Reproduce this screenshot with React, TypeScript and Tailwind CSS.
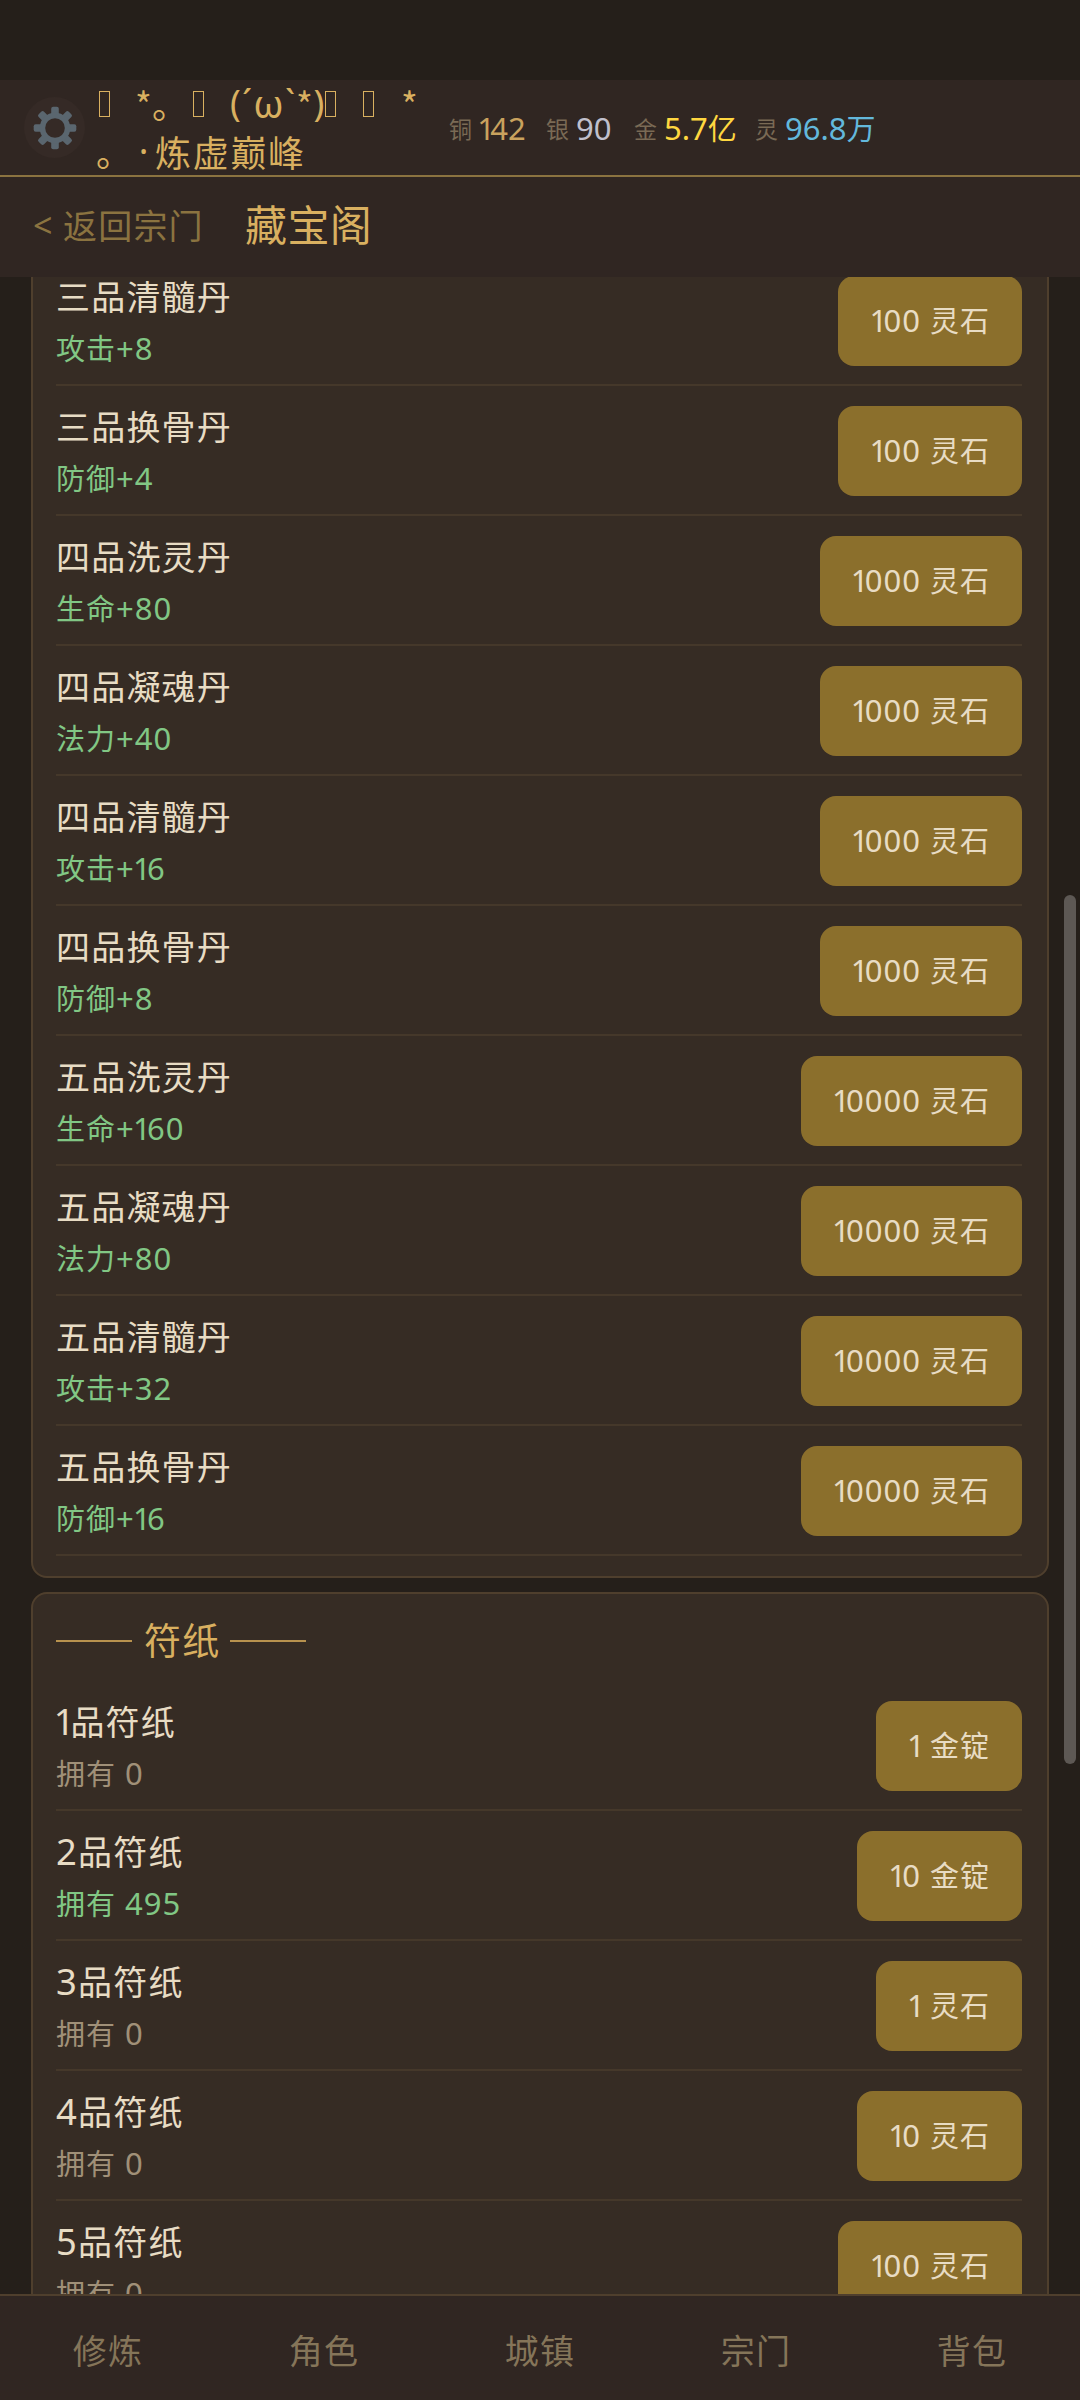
import React from "react";

/* Splits a label so that digit runs use the Latin figures, with a narrow "1". */
function Label({ text }: { text: string }) {
  const parts = text.split(/(1|[02-9.+]+| )/).filter(Boolean);
  return (
    <span className="whitespace-pre">
      {parts.map((p, i) => {
        if (p === " ") return <span key={i} className="tracking-[2.5px]">{" "}</span>;
        if (p === "1")
          return (
            <span key={i} className="-mr-[0.15em] -ml-[0.06em] font-['Noto_Sans','Noto_Sans_CJK_SC',sans-serif] text-[1.07em]">
              {p}
            </span>
          );
        if (/^[0-9.+]/.test(p))
          return (
            <span key={i} className="font-['Noto_Sans','Noto_Sans_CJK_SC',sans-serif] text-[1.07em]">
              {p}
            </span>
          );
        return <span key={i}>{p}</span>;
      })}
    </span>
  );
}

type Item = { name: string; sub: string; price: string; muted?: boolean };

const pills: Item[] = [
  { name: "三品清髓丹", sub: "攻击+8", price: "100 灵石" },
  { name: "三品换骨丹", sub: "防御+4", price: "100 灵石" },
  { name: "四品洗灵丹", sub: "生命+80", price: "1000 灵石" },
  { name: "四品凝魂丹", sub: "法力+40", price: "1000 灵石" },
  { name: "四品清髓丹", sub: "攻击+16", price: "1000 灵石" },
  { name: "四品换骨丹", sub: "防御+8", price: "1000 灵石" },
  { name: "五品洗灵丹", sub: "生命+160", price: "10000 灵石" },
  { name: "五品凝魂丹", sub: "法力+80", price: "10000 灵石" },
  { name: "五品清髓丹", sub: "攻击+32", price: "10000 灵石" },
  { name: "五品换骨丹", sub: "防御+16", price: "10000 灵石" },
];

const papers: Item[] = [
  { name: "1品符纸", sub: "拥有 0", price: "1 金锭", muted: true },
  { name: "2品符纸", sub: "拥有 495", price: "10 金锭" },
  { name: "3品符纸", sub: "拥有 0", price: "1 灵石", muted: true },
  { name: "4品符纸", sub: "拥有 0", price: "10 灵石", muted: true },
  { name: "5品符纸", sub: "拥有 0", price: "100 灵石", muted: true },
];

function Row({ item }: { item: Item }) {
  return (
    <div className="flex h-[130px] items-center justify-between border-b-2 border-[#45382a] pt-[2px]">
      <div className="flex flex-col pt-[2px]">
        <div className="h-[51px] text-[34px] leading-[50px] tracking-[1.2px] whitespace-nowrap text-[#e8dcc4]">
          <Label text={item.name} />
        </div>
        <div
          className={
            "h-[51px] text-[29px] leading-[51px] tracking-[1px] whitespace-nowrap " +
            (item.muted ? "text-[#a09078]" : "text-[#81c784]")
          }
        >
          <Label text={item.sub} />
        </div>
      </div>
      <button className="h-[90px] rounded-2xl bg-[#8b6f2c] pr-8 pl-[33px] text-[29px] leading-none tracking-[1px] text-[#e8dcc4]">
        <Label text={item.price} />
      </button>
    </div>
  );
}

function Gear() {
  return (
    <svg viewBox="-22 -22 44 44" className="h-11 w-11" fill="#5a666f">
      {[0, 45, 90, 135].map((a) => (
        <rect key={a} x="-3.8" y="-21.3" width="7.6" height="42.6" rx="2" transform={`rotate(${a})`} />
      ))}
      <circle r="15.3" />
      <circle r="9.8" fill="#352a26" />
    </svg>
  );
}

function Tofu() {
  return <span className="mt-px block h-[26px] w-[11px] border-[1.5px] border-[#d9b060]" />;
}

const coins = [
  { k: "铜", v: "142", c: "text-[#c9a25e]", w: "w-[97px]" },
  { k: "银", v: "90", c: "text-[#c0c0cc]", w: "w-[88px]" },
  { k: "金", v: "5.7亿", c: "text-[#ffd740]", w: "w-[121px]" },
  { k: "灵", v: "96.8万", c: "text-[#63b8dc]", w: "w-[121px]" },
];

export default function App() {
  return (
    <div className="relative flex h-[2400px] w-[1080px] flex-col overflow-hidden bg-[#251f1a] font-['Noto_Sans_CJK_SC',sans-serif]">
      <div className="h-20 shrink-0" />
      <header className="flex h-[97px] shrink-0 items-center border-b-2 border-[#8b7340] bg-[#302622]">
        <div className="ml-6 flex h-[61px] w-[61px] items-center justify-center rounded-full bg-[#352a26]">
          <Gear />
        </div>
        <div className="ml-[11px] flex h-full w-[353px] flex-col text-[36px] leading-[48px] text-[#d9b060]">
          <div className="flex h-[46px] items-center whitespace-pre">
            <span className="flex w-[39px] pl-[3px]"><Tofu /></span>
            <span className="flex w-[17px] justify-center">*</span>
            <span className="w-[39px]">。</span>
            <span className="flex w-[39px] pl-[2px]"><Tofu /></span>
            <span className="flex w-[11px] justify-center font-['Noto_Sans']">(</span>
            <span className="flex w-[12px] justify-center font-['Noto_Sans']">´</span>
            <span className="flex w-[31px] justify-center font-['Noto_Sans'] text-[38px]">ω</span>
            <span className="flex w-[12px] justify-center font-['Noto_Sans']">`</span>
            <span className="flex w-[17px] justify-center">*</span>
            <span className="flex w-[12px] justify-center font-['Noto_Sans']">)</span>
            <span className="flex w-[38px]"><Tofu /></span>
            <span className="flex w-[38px]"><Tofu /></span>
            <span className="flex w-[17px] justify-center">*</span>
          </div>
          <div className="flex h-[49px] items-center whitespace-pre tracking-[1.7px]">
            <span className="w-[38px]">。</span>
            <span className="flex w-[21px] justify-center font-['Noto_Sans']">·</span>
            <span>炼虚巅峰</span>
          </div>
        </div>
        <div className="flex items-center pt-px">
          {coins.map((c) => (
            <div key={c.k} className={`flex items-center whitespace-nowrap ${c.w}`}>
              <span className="w-[30px] text-[23px] text-[#7a6a55]">{c.k}</span>
              <span className={`text-[29px] ${c.c}`}>
                <Label text={c.v} />
              </span>
            </div>
          ))}
        </div>
      </header>

      <div className="flex h-[100px] shrink-0 items-center bg-[#302622] pb-[6px] pl-[33px] whitespace-pre">
        <span className="w-[30px] pt-[2px] font-['Noto_Sans'] text-[34px] text-[#8b7340]">&lt;</span>
        <span className="w-[182px] pt-px text-[34px] tracking-[1.2px] text-[#8b7340]">返回宗门</span>
        <span className="pb-[2px] text-[42px] leading-[60px] tracking-[0.4px] text-[#d9b060]">藏宝阁</span>
      </div>

      <main className="relative min-h-0 flex-1 overflow-hidden">
        <div className="-mt-[23px] ml-[31px] flex w-[1018px] flex-col gap-[14px]">
          <section className="rounded-2xl border-2 border-[#4f3f2d] bg-[#362c24] pr-[25px] pb-5 pl-[23px]">
            {pills.map((p) => (
              <Row key={p.name} item={p} />
            ))}
          </section>
          <section className="rounded-2xl border-2 border-[#4f3f2d] bg-[#362c24] pr-[25px] pb-6 pl-[23px]">
            <div className="flex h-[87px] items-center gap-3 pt-1">
              <span className="mt-[2px] h-[2px] w-[76px] bg-[#b8924e]" />
              <h2 className="w-[74px] text-[37px] leading-none tracking-[1.3px] whitespace-nowrap text-[#d9b060]">符纸</h2>
              <span className="mt-[2px] h-[2px] w-[76px] bg-[#b8924e]" />
            </div>
            {papers.map((p) => (
              <Row key={p.name} item={p} />
            ))}
          </section>
        </div>
        <div className="absolute top-[618px] right-1 h-[869px] w-3 rounded-full bg-[#5d5854]" />
      </main>

      <nav className="grid h-[106px] shrink-0 grid-cols-5 items-center border-t-2 border-[#4f3f2d] bg-[#302622]">
        {["修炼", "角色", "城镇", "宗门", "背包"].map((t) => (
          <span key={t} className="pt-[2px] text-center text-[34px] tracking-[1.2px] text-[#857559]">
            {t}
          </span>
        ))}
      </nav>
    </div>
  );
}
